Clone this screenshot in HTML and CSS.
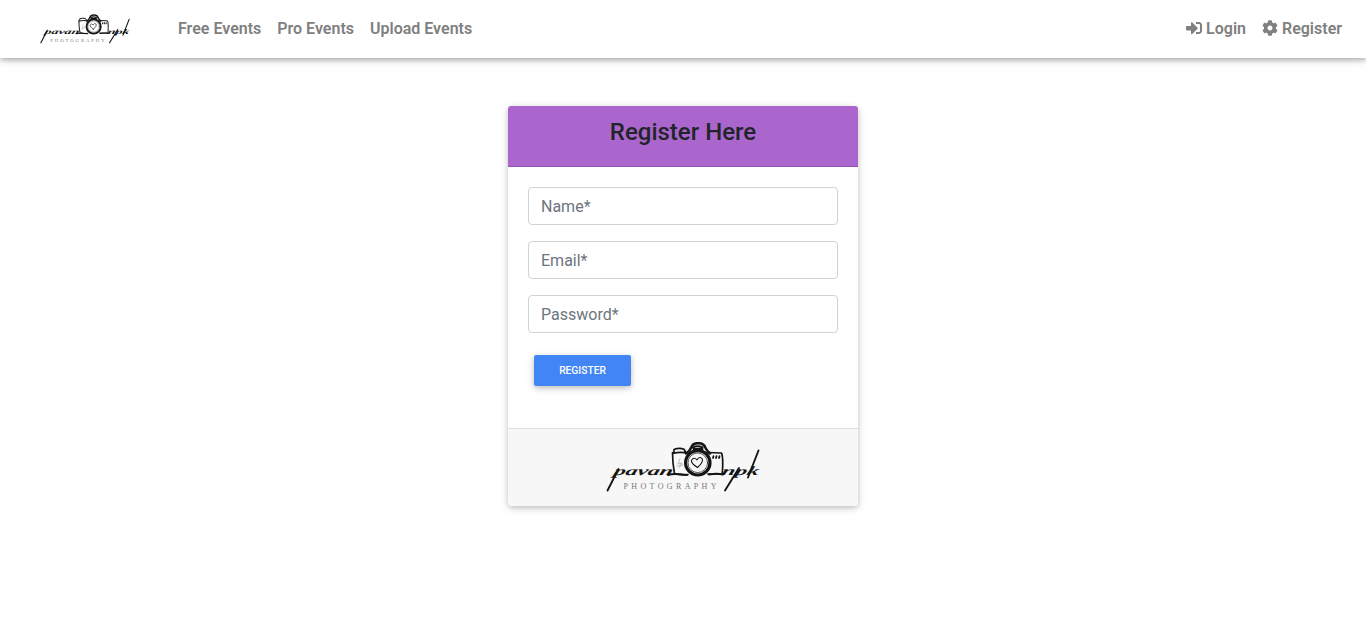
FILE: index.html
```html
<!DOCTYPE html>
<html lang="en">
<head>
<meta charset="utf-8">
<title>Register</title>
<link rel="stylesheet" href="styles.css">
</head>
<body>
<svg class="defs" aria-hidden="true">
  <symbol id="logo" viewBox="0 0 154 50">
    <g fill="none" stroke="#151515" stroke-linecap="round" stroke-linejoin="round">
      <path stroke-width="1.7" d="M66.5 10.5Q66.5 21 68.5 31.5Q74 33.5 82 32.5M67 11.5Q73 9.500 82 11M68 10V7.500Q73 5.500 78 7.200L79.500 10M101 10.500L115.500 11Q117.500 15 116.300 31.800L102 32"/>
      <path stroke-width="2.500" d="M80 11.500Q84 9 85.500 5Q87 1 92 1.200Q98 1 99.500 6Q101 9 104 11.500"/>
      <path stroke-width="2" d="M87 5.500Q91 3 96.500 5.500M87.500 7H96.500"/>
      <circle stroke-width="3.200" cx="91.800" cy="20.800" r="12.200"/>
      <circle stroke-width=".7" cx="91.800" cy="20.800" r="9.800"/>
      <path stroke-width="1.100" d="M91.500 25.500Q85 21.500 85.500 18.500Q87.500 14.500 91 17.800Q94 13.500 96.300 17Q97.500 20 91.500 25.500Z"/>
      <path stroke-width="1.800" d="M107.500 14.200L107 16M110.500 14.200L110 16M113.500 14.200L113 16"/>
      <path stroke="#999" stroke-width=".6" d="M74 17L72 22L76 21L73 26M71 24L77 23"/>
      <path stroke-width="1.900" d="M1.500 48.500L12.500 27M119 48.500L133 26M142 35.500L152.500 8.500M62 33Q67 31 81 33M103 32.500Q111 31 117 32.500"/>
    </g>
    <text class="logo-script" transform="translate(7 33) skewX(-18)" font-size="12.500" textLength="59" lengthAdjust="spacingAndGlyphs">pavan</text>
    <text class="logo-script" transform="translate(115 33) skewX(-18)" font-size="12.500" textLength="37" lengthAdjust="spacingAndGlyphs">npk</text>
    <text class="logo-caption" x="17.500" y="46.500" font-size="8" textLength="93">PHOTOGRAPHY</text>
  </symbol>
</svg>
<nav class="navbar">
  <a class="brand"><svg class="brand-logo" role="img" aria-label="Pavan NPK Photography"><use href="#logo"/></svg></a>
  <div class="nav-links"><a>Free Events</a><a>Pro Events</a><a>Upload Events</a></div>
  <div class="nav-links nav-account">
    <a><svg class="icon" viewBox="0 0 512 512"><path d="M416 448h-84c-6.600 0-12-5.400-12-12v-40c0-6.600 5.400-12 12-12h84c17.700 0 32-14.300 32-32V160c0-17.700-14.300-32-32-32h-84c-6.600 0-12-5.400-12-12V76c0-6.600 5.400-12 12-12h84c53 0 96 43 96 96v192c0 53-43 96-96 96zm-47-201L201 79c-15-15-41-4.500-41 17v96H24c-13.300 0-24 10.700-24 24v96c0 13.300 10.700 24 24 24h136v96c0 21.500 26 32 41 17l168-168c9.300-9.400 9.300-24.600 0-34z"/></svg> Login</a>
    <a><svg class="icon" viewBox="0 0 512 512"><path d="M487.400 315.700l-42.600-24.600c4.300-23.200 4.300-47 0-70.200l42.600-24.600c4.900-2.800 7.100-8.600 5.500-14-11.100-35.600-30-67.800-54.700-94.600-3.800-4.100-10-5.100-14.800-2.300L380.800 110c-17.900-15.400-38.500-27.300-60.800-35.100V25.800c0-5.600-3.900-10.500-9.400-11.700-36.700-8.200-74.300-7.800-109.200 0-5.500 1.200-9.400 6.100-9.400 11.700V75c-22.200 7.900-42.800 19.800-60.800 35.100L88.700 85.500c-4.900-2.800-11-1.900-14.800 2.300-24.700 26.700-43.600 58.900-54.700 94.600-1.700 5.400.6 11.200 5.500 14L67.300 221c-4.300 23.200-4.300 47 0 70.200l-42.600 24.600c-4.900 2.800-7.100 8.600-5.500 14 11.100 35.600 30 67.800 54.700 94.600 3.800 4.100 10 5.100 14.800 2.300l42.600-24.600c17.900 15.400 38.500 27.300 60.800 35.100v49.200c0 5.600 3.900 10.500 9.400 11.700 36.700 8.200 74.300 7.800 109.200 0 5.500-1.200 9.400-6.100 9.400-11.700v-49.200c22.200-7.900 42.800-19.800 60.800-35.100l42.600 24.600c4.900 2.800 11 1.900 14.800-2.300 24.700-26.700 43.600-58.900 54.700-94.600 1.500-5.500-.7-11.300-5.600-14.100zM256 336c-44.100 0-80-35.900-80-80s35.900-80 80-80 80 35.900 80 80-35.900 80-80 80z"/></svg> Register</a>
  </div>
</nav>
<main class="page">
  <form class="card">
    <header class="card-header"><h1>Register Here</h1></header>
    <div class="card-body">
      <input class="field" type="text" placeholder="Name*">
      <input class="field" type="email" placeholder="Email*">
      <input class="field" type="password" placeholder="Password*">
      <button class="submit" type="button">REGISTER</button>
    </div>
    <footer class="card-footer"><svg class="footer-logo" role="img" aria-label="Pavan NPK Photography"><use href="#logo"/></svg></footer>
  </form>
</main>
</body>
</html>
```
FILE: styles.css
```css
* { box-sizing: border-box; }
body {
  margin: 0;
  min-height: 100vh;
  background: #fff;
  color: #212529;
  font: 400 16px/24px Roboto, "Liberation Sans", sans-serif;
}
.defs { display: none; }
.navbar {
  display: flex;
  align-items: center;
  height: 58px;
  padding: 0 24px 0 40px;
  box-shadow: 0 2px 5px rgba(0, 0, 0, .26), 0 2px 10px rgba(0, 0, 0, .12);
}
.brand { display: flex; margin-right: 48px; }
.brand-logo { width: 90px; height: 30px; }
.nav-links { display: flex; gap: 16px; color: #808080; font-weight: 600; }
.nav-account { margin-left: auto; }
.icon { width: 16px; height: 16px; fill: currentColor; vertical-align: -2px; }
.page { display: flex; justify-content: center; padding: 48px 0; }
.card {
  display: flex;
  flex-direction: column;
  width: 350px;
  height: 400px;
  border-radius: 4px;
  background: #fff;
  box-shadow: 0 2px 5px rgba(0, 0, 0, .16), 0 2px 10px rgba(0, 0, 0, .12);
}
.card-header {
  height: 61px;
  padding-top: 12px;
  background: #aa66cc;
  border-bottom: 1px solid #9655b8;
  border-radius: 3px 3px 0 0;
  text-align: center;
}
.card-header h1 { margin: 0; font-size: 24px; line-height: 28.8px; font-weight: 500; }
.card-body {
  display: flex;
  flex: 1;
  flex-direction: column;
  align-items: flex-start;
  gap: 16px;
  padding: 20px;
}
.field {
  width: 100%;
  height: 38px;
  padding: 6px 12px;
  border: 1px solid #ced4da;
  border-radius: 4px;
  font: inherit;
}
.field::placeholder { color: #6c757d; opacity: 1; }
.submit {
  width: 97px;
  height: 31px;
  margin: 6px;
  padding: 0;
  border: 0;
  border-radius: 2px;
  background: #4285f4;
  color: #fff;
  font: 500 10.24px/15px Roboto, sans-serif;
  box-shadow: 0 2px 5px rgba(0, 0, 0, .16), 0 2px 10px rgba(0, 0, 0, .12);
}
.card-footer {
  display: flex;
  justify-content: center;
  height: 78px;
  padding-top: 13px;
  background: #f7f7f7;
  border-top: 1px solid #dfdfdf;
  border-radius: 0 0 4px 4px;
}
.footer-logo { width: 154px; height: 50px; }
.logo-script { fill: #151515; font-family: "Liberation Serif", serif; font-style: italic; font-weight: 700; }
.logo-caption { fill: #777; font-family: "Liberation Serif", serif; }
```
